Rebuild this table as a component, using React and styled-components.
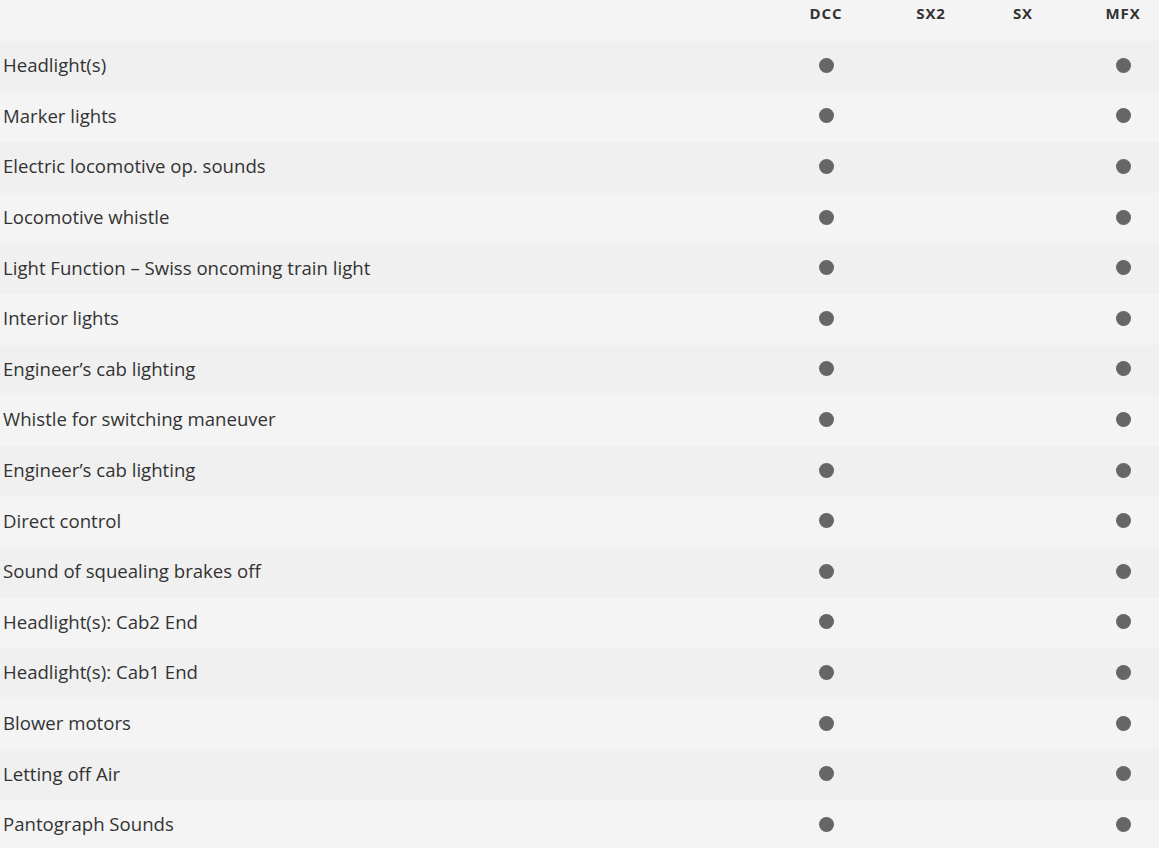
import styled, { createGlobalStyle } from "styled-components";

const GlobalStyle = createGlobalStyle`
  html, body {
    margin: 0;
    padding: 0;
    background: #f4f4f4;
  }
  body {
    font-family: "Open Sans", "Liberation Sans", sans-serif;
    color: #333333;
  }
`;

const columns = ["DCC", "SX2", "SX", "MFX"];

const functions = [
  { name: "Headlight(s)", support: [true, false, false, true] },
  { name: "Marker lights", support: [true, false, false, true] },
  { name: "Electric locomotive op. sounds", support: [true, false, false, true] },
  { name: "Locomotive whistle", support: [true, false, false, true] },
  { name: "Light Function \u2013 Swiss oncoming train light", support: [true, false, false, true] },
  { name: "Interior lights", support: [true, false, false, true] },
  { name: "Engineer\u2019s cab lighting", support: [true, false, false, true] },
  { name: "Whistle for switching maneuver", support: [true, false, false, true] },
  { name: "Engineer\u2019s cab lighting", support: [true, false, false, true] },
  { name: "Direct control", support: [true, false, false, true] },
  { name: "Sound of squealing brakes off", support: [true, false, false, true] },
  { name: "Headlight(s): Cab2 End", support: [true, false, false, true] },
  { name: "Headlight(s): Cab1 End", support: [true, false, false, true] },
  { name: "Blower motors", support: [true, false, false, true] },
  { name: "Letting off Air", support: [true, false, false, true] },
  { name: "Pantograph Sounds", support: [true, false, false, true] },
];

const Table = styled.div`
  width: 100%;
  display: flex;
  flex-direction: column;
`;

const Row = styled.div`
  display: grid;
  grid-template-columns: 1fr 154px 56px 128px 72px;
  align-items: center;
  box-sizing: border-box;
  height: ${({ $header }) => ($header ? "41px" : "50.6px")};
  padding-bottom: ${({ $header }) => ($header ? "0" : "2px")};
  background: ${({ $striped }) => ($striped ? "#f0f0f0" : "#f4f4f4")};
`;

const HeadCell = styled.div`
  align-self: start;
  padding-top: 3px;
  text-align: center;
  font-size: 15px;
  font-weight: 700;
  letter-spacing: 0.9px;
  line-height: 20px;
  color: #333333;
`;

const NameCell = styled.div`
  padding-left: 3px;
  font-size: 18.6px;
  line-height: 24px;
  color: #333333;
  white-space: nowrap;
`;

const DotCell = styled.div`
  display: flex;
  justify-content: center;
  align-items: center;
`;

const Dot = styled.span`
  width: 15px;
  height: 15px;
  border-radius: 50%;
  background: #666666;
`;

export default function App() {
  return (
    <>
      <GlobalStyle />
      <Table>
        <Row $header>
          <div />
          {columns.map((c) => (
            <HeadCell key={c}>{c}</HeadCell>
          ))}
        </Row>
        {functions.map((f, i) => (
          <Row key={i} $striped={i % 2 === 0}>
            <NameCell>{f.name}</NameCell>
            {f.support.map((on, j) => (
              <DotCell key={j}>{on && <Dot />}</DotCell>
            ))}
          </Row>
        ))}
      </Table>
    </>
  );
}
